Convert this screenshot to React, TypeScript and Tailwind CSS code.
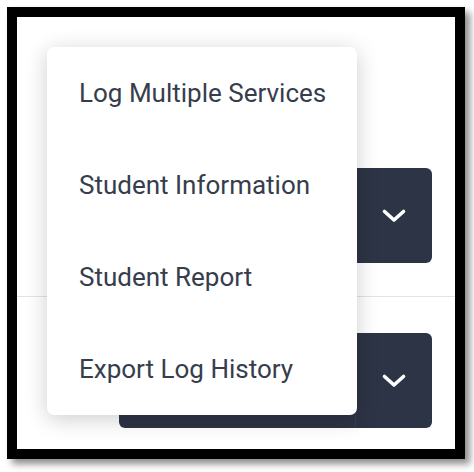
import React from 'react';

const items = [
  'Log Multiple Services',
  'Student Information',
  'Student Report',
  'Export Log History',
];

function Chevron() {
  return (
    <svg width="26" height="16" viewBox="0 0 26 16" fill="none">
      <polyline
        points="3.5,3.5 13,12 22.5,3.5"
        stroke="#ffffff"
        strokeWidth="3.6"
        strokeLinecap="round"
        strokeLinejoin="round"
      />
    </svg>
  );
}

function SplitButton() {
  return (
    <div className="flex h-[95px] w-[313px] overflow-hidden rounded-[6px] bg-[#2d3445]">
      <div className="flex-1" />
      <div className="flex w-[77px] items-center justify-center border-l border-[#363e50]">
        <Chevron />
      </div>
    </div>
  );
}

export default function App() {
  return (
    <div className="h-[472px] w-[474px] bg-white pl-[7px] pt-[7px] font-['Roboto',sans-serif]">
      <div className="h-[452px] w-[458px] border-[10px] border-black bg-white shadow-[5px_5px_7px_rgba(0,0,0,0.45)]">
        <div className="relative flex h-full flex-col">
          <div className="flex justify-end pr-[23px] pt-[151px]">
            <SplitButton />
          </div>
          <div className="mt-[33px] h-px bg-[#e3e3e3]" />
          <div className="mt-[36px] flex justify-end pr-[23px]">
            <SplitButton />
          </div>

          <div className="absolute left-[30px] top-[30px] w-[310px] rounded-[7px] bg-white shadow-[0_4px_22px_rgba(0,0,0,0.2)]">
            {items.map((label) => (
              <div
                key={label}
                className="flex h-[92px] items-center pl-[32px] text-[26px] leading-none text-[#363d4d]"
              >
                {label}
              </div>
            ))}
          </div>
        </div>
      </div>
    </div>
  );
}
